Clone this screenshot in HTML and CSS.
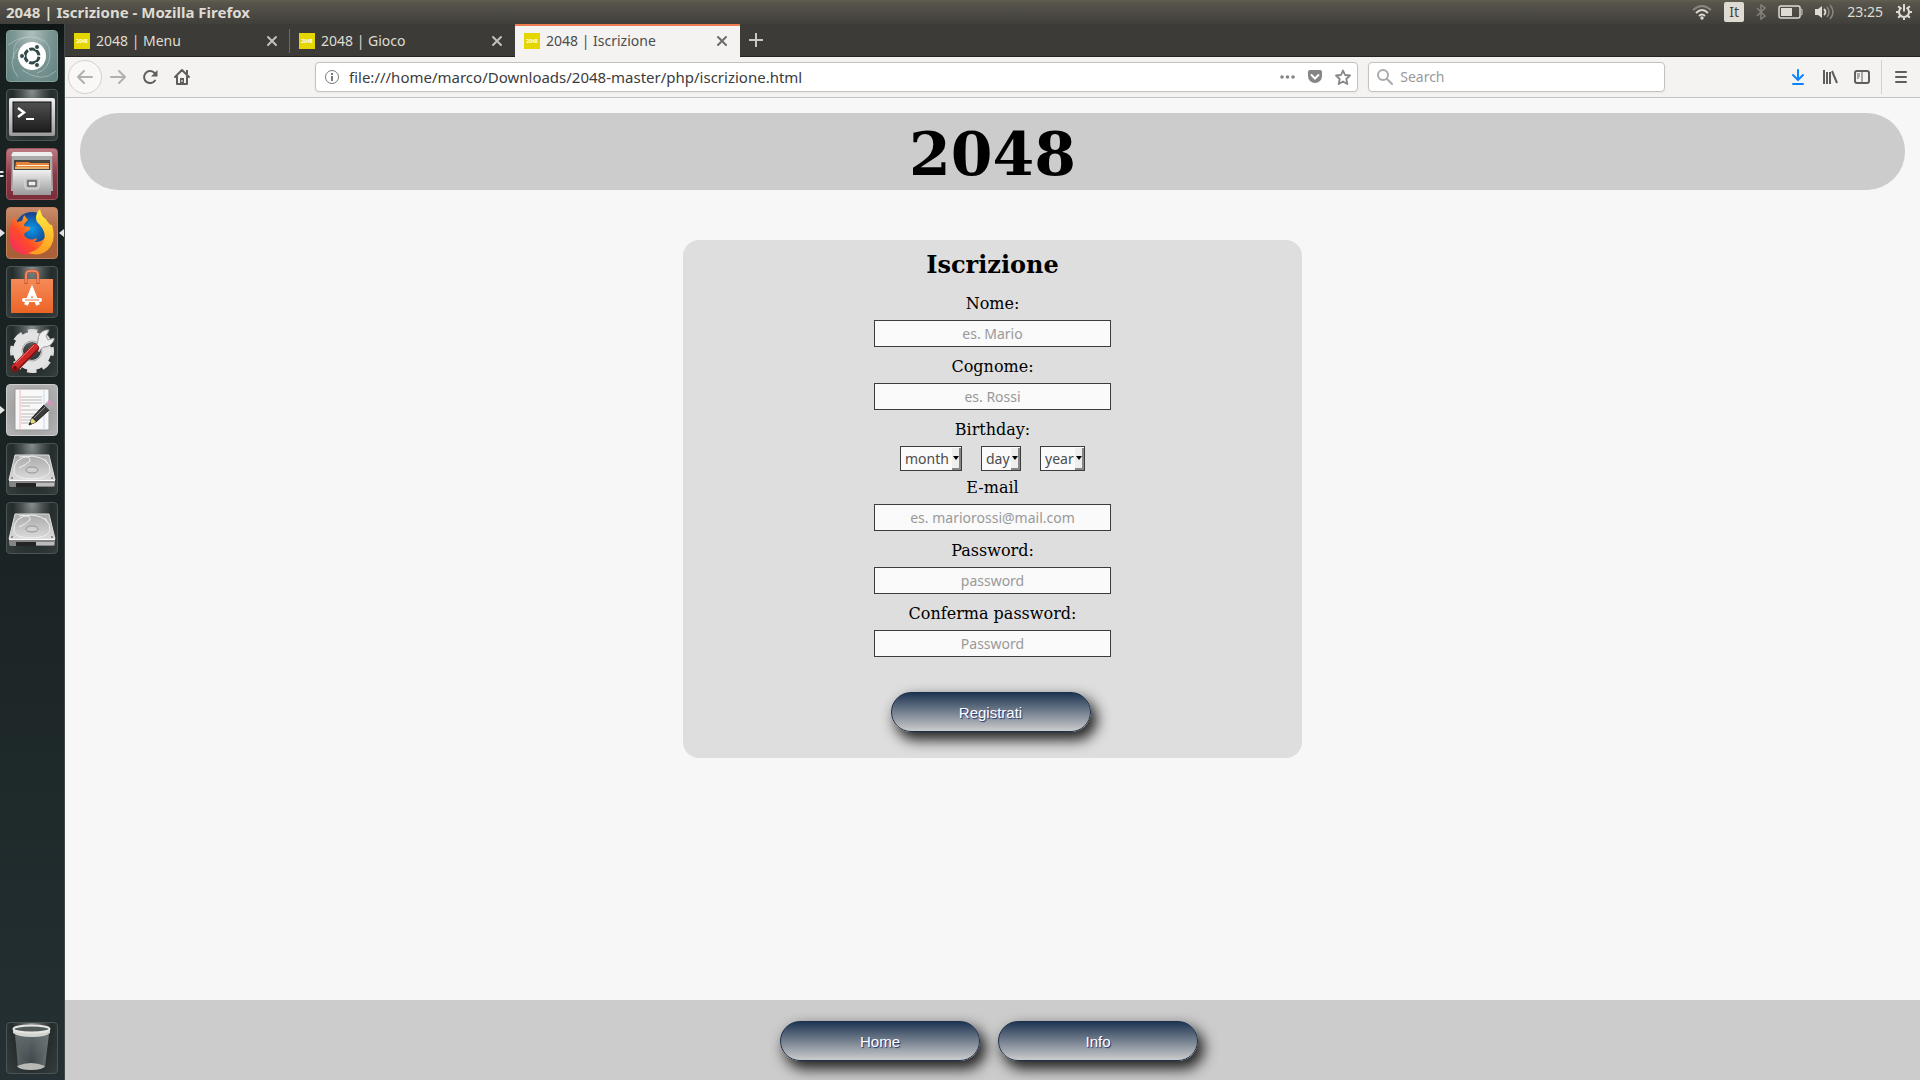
FILE: index.html
```
<!DOCTYPE html>
<html lang="it">
<head>
<meta charset="utf-8">
<title>2048 | Iscrizione</title>
<link rel="stylesheet" href="styles.css">
</head>
<body>
<svg class="defs" width="0" height="0" aria-hidden="true">
  <defs>
    <linearGradient id="steel" x1="0" y1="0" x2="0" y2="1"><stop offset="0" stop-color="#f0f0f0"/><stop offset="1" stop-color="#9a9a9a"/></linearGradient>
    <linearGradient id="platter" x1="0" y1="0" x2="0" y2="1"><stop offset="0" stop-color="#a9a9a9"/><stop offset="1" stop-color="#dcdcdc"/></linearGradient>
    <linearGradient id="screen" x1="0" y1="0" x2="0" y2="1"><stop offset="0" stop-color="#505050"/><stop offset="1" stop-color="#1c1c1c"/></linearGradient>
    <linearGradient id="bag" x1="0" y1="0" x2="0" y2="1"><stop offset="0" stop-color="#f58a58"/><stop offset="1" stop-color="#ec6426"/></linearGradient>
    <linearGradient id="fire" x1="0" y1="1" x2="1" y2="0"><stop offset="0" stop-color="#f0256c"/><stop offset=".4" stop-color="#ff4a2a"/><stop offset=".7" stop-color="#ff9a1a"/><stop offset="1" stop-color="#fff23c"/></linearGradient>
    <linearGradient id="flame" x1="0" y1="0" x2="0" y2="1"><stop offset="0" stop-color="#fff040"/><stop offset="1" stop-color="#ff9a20"/></linearGradient>
    <radialGradient id="globe"><stop offset="0" stop-color="#0a9ae8"/><stop offset="1" stop-color="#173f8c"/></radialGradient>
    <linearGradient id="glass" x1="0" y1="0" x2="1" y2="0"><stop offset="0" stop-color="#8b9494" stop-opacity=".55"/><stop offset=".5" stop-color="#59666a" stop-opacity=".5"/><stop offset="1" stop-color="#9aa2a2" stop-opacity=".6"/></linearGradient>
    <symbol id="close" viewBox="0 0 12 12"><path d="M2 2l8 8M10 2l-8 8" fill="none" stroke="currentColor" stroke-width="2" stroke-linecap="round"/></symbol>
    <symbol id="disk" viewBox="0 0 52 52">
      <path d="M9 12h34l6 25H3z" fill="url(#platter)" stroke="#e0e0e0"/>
      <path d="M3 37h46v5q0 2-2 2H5q-2 0-2-2z" fill="#858585"/>
      <path d="M3 37.500h46" stroke="#fff"/>
      <path d="M10 40h20v4H10z" fill="#242424"/><path d="M30 40h18v3H30z" fill="#bcbcbc"/>
      <path d="M8 30Q6 14 26 13Q45 15 44 29Q40 36 26 36Q11 36 8 30M13 14Q25 12 24 18Q20 22 13 25M39 16l2 4" fill="none" stroke="#f0f0f0"/>
      <ellipse cx="26" cy="27" rx="6" ry="3" fill="#d0d0d0" stroke="#929292"/>
      <circle cx="6" cy="35" r="1" fill="#777"/><circle cx="46" cy="35" r="1" fill="#777"/>
    </symbol>
  </defs>
</svg>

<header class="panel">
  <span class="panel-title">2048 | Iscrizione - Mozilla Firefox</span>
  <div class="indicators">
    <svg width="20" height="16" viewBox="0 0 20 16" fill="none" stroke="#dfdbd2" stroke-width="1.800"><path d="M1 6Q10-2 19 6" stroke="#8a877f"/><path d="M4 9Q10 3 16 9M7 12Q10 9 13 12"/><circle cx="10" cy="14" r=".8"/></svg>
    <span class="keyboard">It</span>
    <svg width="10" height="16" viewBox="0 0 10 16" fill="none" stroke="#85827a" stroke-width="1.500"><path d="M1 4l8 8-4 3V1l4 3-8 8"/></svg>
    <svg width="25" height="14" viewBox="0 0 25 14"><rect x="1" y="1" width="21" height="12" rx="2" fill="none" stroke="#dfdbd2" stroke-width="1.500"/><path d="M3 3h11v8H3z" fill="#dfdbd2"/><path d="M23 4q1 0 1 1v4q0 1-1 1" fill="none" stroke="#dfdbd2"/></svg>
    <svg width="20" height="18" viewBox="0 0 20 18"><path d="M0 6h3l4-3v12l-4-3H0z" fill="#dfdbd2"/><path d="M9 6q3 3 0 6" fill="none" stroke="#dfdbd2" stroke-width="1.800"/><path d="M12 4q4 5 0 10M15 2q6 7 0 14" fill="none" stroke="#8a877f" stroke-width="1.500"/></svg>
    <span class="clock">23:25</span>
    <svg width="18" height="18" viewBox="0 0 18 18" fill="none" stroke="#dfdbd2" stroke-width="2"><path d="M6.500 4.700a5 5 0 1 0 5 0M9 1v7.500M1 9h3M14 9h3M9 14v3M3.200 3.200l2.300 2.300M14.800 3.200l-2.300 2.300M3.200 14.800l2.300-2.300M14.800 14.800l-2.300-2.300"/></svg>
  </div>
</header>

<div class="desktop">
  <nav class="launcher" aria-label="Launcher">
    <button class="tile dash" aria-label="Dash">
      <svg viewBox="0 0 52 52"><path d="M8 29Q5 8 24 7Q44 6 44 25Q43 40 31 43M2 15Q22 0 38 12M12 47Q0 32 12 18M50 41Q36 54 16 40" fill="none" stroke="#b8cbc9" stroke-opacity=".6"/><circle cx="26" cy="26" r="14" fill="#fff"/><circle cx="26" cy="26" r="7" fill="none" stroke="#32494a" stroke-width="3" stroke-dasharray="13 1.660" stroke-dashoffset="-.8"/><g fill="#32494a" stroke="#fff" stroke-width="1"><circle cx="16" cy="26" r="2.500"/><circle cx="31" cy="17" r="2.500"/><circle cx="31" cy="35" r="2.500"/></g></svg>
    </button>
    <button class="tile" aria-label="Terminale">
      <svg viewBox="0 0 52 52"><rect x="3" y="9" width="46" height="38" rx="2" fill="url(#steel)"/><rect x="7" y="13" width="38" height="30" fill="url(#screen)" stroke="#111"/><path d="M12 19l6 4.500-6 4.500" fill="none" stroke="#fff" stroke-width="2.500"/><path d="M20 30h8" stroke="#fff" stroke-width="2"/></svg>
    </button>
    <button class="tile files" aria-label="File">
      <svg viewBox="0 0 52 52"><path d="M6 5q1-1 3-1h34q2 0 3 1l1 38H5z" fill="#aaa"/><path d="M7 4h38l2 4H5z" fill="#eee"/><path d="M8 12h36v10H8z" fill="#47433e"/><path d="M10 14h13l1 1h19v6H9z" fill="#e9823a"/><path d="M11 17.500h32" stroke="#fff0d0"/><path d="M9 20h34" stroke="#e7b06c" stroke-width="2"/><path d="M7 22h38v25H7z" fill="url(#steel)"/><rect x="19" y="30" width="14" height="11" rx="2" fill="#bbb" stroke="#ddd"/><rect x="22" y="33" width="8" height="5" fill="#eee" stroke="#333"/></svg>
      <svg class="mark left" viewBox="0 0 5 8"><path d="M0 1h3l1 1-1 1H0M0 5h3l1 1-1 1H0" fill="#e4e4e4"/></svg>
    </button>
    <button class="tile firefox" aria-label="Firefox">
      <svg viewBox="0 0 52 52"><circle cx="26" cy="22" r="17" fill="url(#globe)"/><path d="M8 10l3 5 5-1 2-6 4 5q-4 3-4 6l6 1q1 3-4 5-4 3 1 6 5 3 9 0 2 2-2 4 10 1 12-8 3 13-10 20-21 4-26-12-2-14 4-25z" fill="url(#fire)"/><path d="M34 2q-6 6-3 13 10 9 7 19-4 9-16 12 15 5 23-7 5-9 1-21-3 0-6-6-5-3-6-10z" fill="url(#flame)"/></svg>
      <svg class="mark left" viewBox="0 0 5 8"><path d="M0 0l5 4-5 4z" fill="#e4e4e4"/></svg>
      <svg class="mark right" viewBox="0 0 5 8"><path d="M5 0L0 4l5 4z" fill="#e4e4e4"/></svg>
    </button>
    <button class="tile" aria-label="Ubuntu Software">
      <svg viewBox="0 0 52 52"><path d="M5 13h42v34H5z" fill="url(#bag)"/><path d="M20 18v-9q0-4 4-4h4q4 0 4 4v9" fill="none" stroke="#c8532a" stroke-width="3"/><path d="M20 17V9q0-4 4-4h4q4 0 4 4v8" fill="none" stroke="#f5946c" stroke-width="1.500"/><path d="M20 39l6-15 6 15" fill="none" stroke="#fff" stroke-width="4"/><path d="M18 34h16" stroke="#fff" stroke-width="4" stroke-linecap="round"/><path d="M19 34h14" stroke="#ee7039"/></svg>
    </button>
    <button class="tile" aria-label="Impostazioni">
      <svg viewBox="0 0 52 52"><circle cx="26" cy="26" r="19" fill="none" stroke="#ddd" stroke-width="6" stroke-dasharray="9 5.920" stroke-dashoffset="4.500"/><circle cx="26" cy="26" r="14" fill="none" stroke="#e3e3e3" stroke-width="10"/><circle cx="26" cy="26" r="10" fill="none" stroke="#aaa"/><path d="M29 21q3-1 3-6 0-8 8-10l3 0-3 6 2 4 6-2 0 2q-3 7-10 7-3 1-5 5z" fill="#eee" stroke="#999"/><path d="M9 43L29 23" stroke="#801414" stroke-width="8" stroke-linecap="round"/><path d="M9 42L29 22" stroke="#cf2828" stroke-width="6" stroke-linecap="round"/><path d="M10 38L28 20" stroke="#ef7777"/><circle cx="9" cy="43" r="2" fill="#5f0d0d"/></svg>
    </button>
    <button class="tile editor" aria-label="Editor di testo">
      <svg viewBox="0 0 52 52"><path d="M9 5h34v41H9z" fill="#f8f8f8" stroke="#999"/><path d="M14 5v41" stroke="#f7b7b7"/><path d="M38 5v41" stroke="#c5d6f5"/><path d="M15 13h21M15 16h21M15 19h21M15 22h9M15 26h20M15 30h15M15 33h12M15 36h10M15 39h8" stroke="#bbb"/><path d="M23 41l3-7 12-13 5 5-13 12z" fill="#3a3a3a" stroke="#181818"/><path d="M28 34l11-11" stroke="#909090"/><path d="M23 41l3-7 4 4z" fill="#e5db83"/><path d="M23 41l1-3 2 2z" fill="#111"/><path d="M38 21l3-3 5 5-3 3z" fill="#aaa"/><path d="M41 18l2-2q2 0 4 4l-1 3z" fill="#dc91bd"/></svg>
      <svg class="mark left" viewBox="0 0 5 8"><path d="M0 0l5 4-5 4z" fill="#e4e4e4"/></svg>
    </button>
    <button class="tile" aria-label="Disco 1"><svg viewBox="0 0 52 52"><use href="#disk"/></svg></button>
    <button class="tile" aria-label="Disco 2"><svg viewBox="0 0 52 52"><use href="#disk"/></svg></button>
    <button class="tile trash" aria-label="Cestino">
      <svg viewBox="0 0 52 52"><path d="M9 12h34l-4 33q-13 5-27 0z" fill="url(#glass)"/><path d="M11 44q14-6 28 0-2 4-14 4t-14-4" fill="#b8bab6"/><path d="M7 7v4q5 4 19 4t18-4V7" fill="#d4d4d0"/><ellipse cx="25.500" cy="7" rx="18" ry="3.500" fill="#525b5b" stroke="#e5e5e2" stroke-width="2"/></svg>
    </button>
  </nav>

  <div class="browser">
    <div class="tabs">
      <div class="tab"><span class="favicon">2048</span><span class="tab-name">2048 | Menu</span><button aria-label="Chiudi Menu"><svg><use href="#close"/></svg></button></div>
      <div class="tab"><span class="favicon">2048</span><span class="tab-name">2048 | Gioco</span><button aria-label="Chiudi Gioco"><svg><use href="#close"/></svg></button></div>
      <div class="tab active"><span class="favicon">2048</span><span class="tab-name">2048 | Iscrizione</span><button aria-label="Chiudi Iscrizione"><svg><use href="#close"/></svg></button></div>
      <button class="new-tab" aria-label="Nuova scheda"><svg viewBox="0 0 14 14"><path d="M7 0v14M0 7h14" stroke="#cbc8c2" stroke-width="2"/></svg></button>
    </div>

    <div class="toolbar">
      <div class="nav-buttons">
        <button class="back" aria-label="Indietro"><svg viewBox="0 0 16 16" fill="none" stroke="#b2b1b0" stroke-width="2" stroke-linecap="round" stroke-linejoin="round"><path d="M15 8H1M7 2L1 8l6 6"/></svg></button>
        <button aria-label="Avanti"><svg viewBox="0 0 16 16" fill="none" stroke="#b2b1b0" stroke-width="2" stroke-linecap="round" stroke-linejoin="round"><path d="M1 8h14M9 2l6 6-6 6"/></svg></button>
        <button aria-label="Ricarica"><svg viewBox="0 0 16 16"><path d="M13 11.500A6 6 0 1 1 12 3.500L14 6" fill="none" stroke="#5f5e5c" stroke-width="2" stroke-linecap="round"/><path d="M15.500 1v6.500H9z" fill="#5f5e5c"/></svg></button>
        <button aria-label="Pagina iniziale"><svg viewBox="0 0 16 16"><path d="M1 8l7-7 7 7M3 7v8h10V7" fill="none" stroke="#5f5e5c" stroke-width="2" stroke-linecap="round" stroke-linejoin="round"/><path d="M6 15V9h4v6zM12 1h2v4h-2z" fill="#5f5e5c"/><path d="M8 11v2" stroke="#fff"/></svg></button>
      </div>
      <div class="field address">
        <svg viewBox="0 0 16 16"><circle cx="8" cy="8" r="6.500" fill="none" stroke="#777"/><path d="M7 4h2v2H7zM7 7h2v5H7z" fill="#777"/></svg>
        <input type="text" aria-label="Indirizzo" value="file:///home/marco/Downloads/2048-master/php/iscrizione.html">
        <button aria-label="Azioni"><svg viewBox="0 0 16 16" fill="#858585"><circle cx="3" cy="8" r="1.800"/><circle cx="8.500" cy="8" r="1.800"/><circle cx="14" cy="8" r="1.800"/></svg></button>
        <button aria-label="Pocket"><svg viewBox="0 0 16 16"><path d="M3 1h10q2 0 2 2v4a7 7 0 0 1-14 0V3q0-2 2-2z" fill="#858585"/><path d="M4.500 6L8 9.500 11.500 6" fill="none" stroke="#fff" stroke-width="2" stroke-linecap="round"/></svg></button>
        <button aria-label="Segnalibro"><svg viewBox="0 0 16 16"><path d="M8 1.500l2 4.500 5 .5-3.700 3.500 1 5L8 12.500 3.700 15l1-5L1 6.500 6 6z" fill="none" stroke="#858585" stroke-width="1.800" stroke-linejoin="round"/></svg></button>
      </div>
      <div class="field search">
        <svg viewBox="0 0 16 16"><circle cx="6" cy="6" r="5" fill="none" stroke="#aaa" stroke-width="2"/><path d="M10 10l5 5" stroke="#aaa" stroke-width="2" stroke-linecap="round"/></svg>
        <input type="text" aria-label="Cerca" placeholder="Search">
      </div>
      <div class="tools">
        <button aria-label="Download"><svg viewBox="0 0 16 16" fill="none" stroke="#0a84ff" stroke-width="2" stroke-linecap="round" stroke-linejoin="round"><path d="M8 1v10M3 6l5 5 5-5M3 15h10"/></svg></button>
        <button aria-label="Libreria"><svg viewBox="0 0 16 16" stroke="#5f5e5c" stroke-width="2"><path d="M2 1v14M5 3v12M8 3v12M10 2l5 12"/></svg></button>
        <button aria-label="Barra laterale"><svg viewBox="0 0 16 16" fill="none" stroke="#5f5e5c"><rect x="1" y="2" width="14" height="12" rx="2" stroke-width="2"/><path d="M8 2v12"/><path d="M3 5h3M3 7h3M3 9h2"/></svg></button>
      </div>
      <button class="menu" aria-label="Menu"><svg viewBox="0 0 16 16" stroke="#5f5e5c" stroke-width="2" stroke-linecap="round"><path d="M3 3h10M3 8h10M3 13h10"/></svg></button>
    </div>

    <div class="page">
      <header class="banner"><h1>2048</h1></header>
      <main>
        <form class="signup">
          <h2>Iscrizione</h2>
          <div class="row"><label for="nome">Nome:</label><input id="nome" type="text" placeholder="es. Mario"></div>
          <div class="row"><label for="cognome">Cognome:</label><input id="cognome" type="text" placeholder="es. Rossi"></div>
          <div class="row birthday"><label for="month">Birthday:</label>
            <div class="dates">
              <span class="pick month"><select id="month" aria-label="month"><option>month</option></select><svg viewBox="0 0 6 4"><path d="M0 0h6L3 4z"/></svg></span>
              <span class="pick day"><select aria-label="day"><option>day</option></select><svg viewBox="0 0 6 4"><path d="M0 0h6L3 4z"/></svg></span>
              <span class="pick year"><select aria-label="year"><option>year</option></select><svg viewBox="0 0 6 4"><path d="M0 0h6L3 4z"/></svg></span>
            </div>
          </div>
          <div class="row"><label for="email">E-mail</label><input id="email" type="email" placeholder="es. mariorossi@mail.com"></div>
          <div class="row"><label for="password">Password:</label><input id="password" type="password" placeholder="password"></div>
          <div class="row"><label for="conferma">Conferma password:</label><input id="conferma" type="password" placeholder="Password"></div>
          <div class="actions"><button class="pill" type="submit">Registrati</button></div>
        </form>
      </main>
      <footer>
        <button class="pill">Home</button>
        <button class="pill">Info</button>
      </footer>
    </div>
  </div>
</div>
</body>
</html>
```
FILE: styles.css
```
* { box-sizing: border-box; }

body {
  margin: 0;
  min-height: 100vh;
  display: flex;
  flex-direction: column;
  font: 14px/20px "Noto Sans", sans-serif;
}

button {
  padding: 0;
  border: 0;
  background: none;
  display: flex;
  align-items: center;
  justify-content: center;
}

svg { display: block; flex: none; }
.defs { position: absolute; }

/* Top panel */
.panel {
  height: 24px;
  padding: 0 7px 0 6px;
  display: flex;
  align-items: center;
  justify-content: space-between;
  color: #dfdbd2;
  background: linear-gradient(#625e4f, #57544c 3px, #403f3a);
}
.panel-title { font-size: 15px; font-weight: 700; }
.indicators { display: flex; align-items: center; gap: 12px; }
.keyboard {
  width: 20px;
  border-radius: 2px;
  background: #dfdbd2;
  color: #45433e;
  font-size: 14px;
  text-align: center;
}

.desktop { flex: 1; display: flex; }

/* Launcher */
.launcher {
  width: 65px;
  padding: 6px 6px;
  display: flex;
  flex-direction: column;
  gap: 7px;
  background: linear-gradient(#0f1515, #182020 30px, #1b2424 50%, #243033);
  border-right: 1px solid #42494a;
}
.tile {
  position: relative;
  width: 52px;
  height: 52px;
  border: 1px solid #4c5353;
  border-radius: 4px;
  background: radial-gradient(ellipse at 50% 0, #8a8f8f, #4a5151 30%, #252c2c 55%, #363d3d);
}
.tile > svg:first-child { width: 52px; height: 52px; margin: -1px; }
.dash { background: radial-gradient(ellipse at 50% 0, #b0bfbd, #7d9795 50%, #5f8280); border-color: #86a19e; }
.files { background: linear-gradient(#bd7c83, #8b3a47 50%, #7b2d3a); border-color: #a05660; }
.firefox { background: linear-gradient(#c98c6c, #ad653c 50%, #a85f37); border-color: #c1845f; }
.editor { background: radial-gradient(#8f8f8f, #b5b5b5); border-color: #ccc; }
.trash { margin-top: auto; }
.mark { position: absolute; top: 21px; width: 5px; height: 8px; }
.mark.left { left: -7px; }
.mark.right { right: -7px; }

/* Browser chrome */
.browser { flex: 1; min-width: 0; display: flex; flex-direction: column; }
.tabs {
  height: 33px;
  display: flex;
  background: #3c3b37;
  color: #dfdbd2;
  border-bottom: 1px solid #252422;
}
.tab {
  width: 225px;
  padding: 1px 12px 0 9px;
  display: flex;
  align-items: center;
  gap: 6px;
  background: linear-gradient(#6b6a66, #6b6a66) right 5px / 1px 24px no-repeat;
}
.tab:nth-child(2) { background: none; }
.tab-name { flex: 1; }
.tab button { color: #c4c1bb; width: 12px; height: 12px; }
.tab button svg { width: 12px; height: 12px; }
.tab.active {
  height: 33px;
  background: #f4f3f1;
  color: #4c4c4c;
  border-top: 2px solid #ef7c50;
  padding: 0 12px 2px 9px;
}
.tab.active button { color: #6d6c6a; }
.favicon {
  width: 16px;
  height: 16px;
  background: #e6d600;
  color: #fff;
  font-size: 5px;
  font-weight: 700;
  line-height: 16px;
  text-align: center;
}
.new-tab { width: 32px; height: 32px; }
.new-tab svg { width: 14px; height: 14px; }

.toolbar {
  height: 41px;
  display: flex;
  align-items: center;
  background: #f4f3f1;
  border-bottom: 1px solid #c4c3c1;
}
.toolbar svg { width: 16px; height: 16px; }
.nav-buttons { width: 250px; padding-left: 3px; display: flex; align-items: center; }
.nav-buttons button { width: 32px; height: 34px; }
.nav-buttons .back { width: 34px; border: 1px solid #d2d1cf; border-radius: 50%; background: #f9f8f7; }
.field {
  height: 30px;
  display: flex;
  align-items: center;
  gap: 12px;
  border: 1px solid #c2c1bf;
  border-radius: 4px;
  background: #fff;
  box-shadow: 0 1px 3px #0000000d;
}
.field input {
  flex: 1;
  min-width: 0;
  padding: 0;
  border: 0;
  background: none;
  color: #3c3c3c;
  font: 15px/20px "Noto Sans", sans-serif;
}
.address { flex: 1; padding: 0 6px 0 8px; }
.address input { margin-left: -3px; }
.search { flex: 0 0 16%; margin-left: 10px; padding: 0 8px; gap: 7px; }
.search input { font-size: 14px; }
.field input::placeholder { color: #999; opacity: 1; }
.tools { width: 216px; padding-right: 11px; display: flex; justify-content: flex-end; gap: 16px; }
.menu { width: 39px; height: 34px; border-left: 1px solid #d2d1cf; }

/* Page */
.page { flex: 1; display: flex; flex-direction: column; background: #f7f7f7; font-family: "DejaVu Serif", serif; }
.banner { margin: 15px 15px 0; border-radius: 38px; background: #ccc; text-align: center; }
h1 { margin: 0; padding-top: 6px; font-size: 60px; line-height: 71px; }
main { flex: 1; padding: 50px 0; }
.signup {
  width: 33.36%;
  min-width: 320px;
  margin: 0 auto;
  padding: 11px 0 26px;
  display: flex;
  flex-direction: column;
  align-items: center;
  border-radius: 16px;
  background: #dedede;
}
h2 { margin: 0 0 15px; font-size: 24px; line-height: 28px; }
.row { display: flex; flex-direction: column; align-items: center; gap: 6px; margin-bottom: 10px; }
.row label { font-size: 16px; line-height: 20px; }
.row input {
  width: 237px;
  height: 27px;
  padding: 0 4px;
  border: 1px solid #3c3c3c;
  background: #fafafa;
  font: 14px/20px "Noto Sans", sans-serif;
  text-align: center;
}
.row input::placeholder { color: #999; opacity: 1; }
.birthday { margin-bottom: 7px; }
.dates { display: flex; gap: 19px; }
.pick { position: relative; height: 25px; }
.month { width: 62px; }
.day { width: 40px; }
.year { width: 45px; }
.pick select {
  appearance: none;
  width: 100%;
  height: 25px;
  padding: 0 0 0 4px;
  border: 1px solid #3c3c3c;
  border-radius: 0;
  background: #fafafa;
  color: #4c4c4c;
  font: 14px/20px "Noto Sans", sans-serif;
}
.pick svg {
  position: absolute;
  right: 1px;
  top: 2px;
  width: 9px;
  height: 22px;
  padding: 8px 0 8px 1px;
  background: #efeeec;
  border-right: 2px solid #888;
  border-bottom: 2px solid #888;
  pointer-events: none;
}
.pill {
  width: 200px;
  height: 40px;
  padding-top: 2px;
  border: 1px solid #1d3049;
  border-radius: 20px;
  background: linear-gradient(#1e3552, #ccc);
  color: #fff;
  font: 15px/20px "Liberation Sans", sans-serif;
  text-shadow: 1px 1px 1px #1f2f6d;
  box-shadow: 5px 7px 14px 1px #222;
}
.actions { padding: 25px 4px 0 0; }
footer {
  height: 80px;
  padding: 2px 7px 0 0;
  display: flex;
  justify-content: center;
  align-items: center;
  gap: 18px;
  background: #ccc;
}
```
